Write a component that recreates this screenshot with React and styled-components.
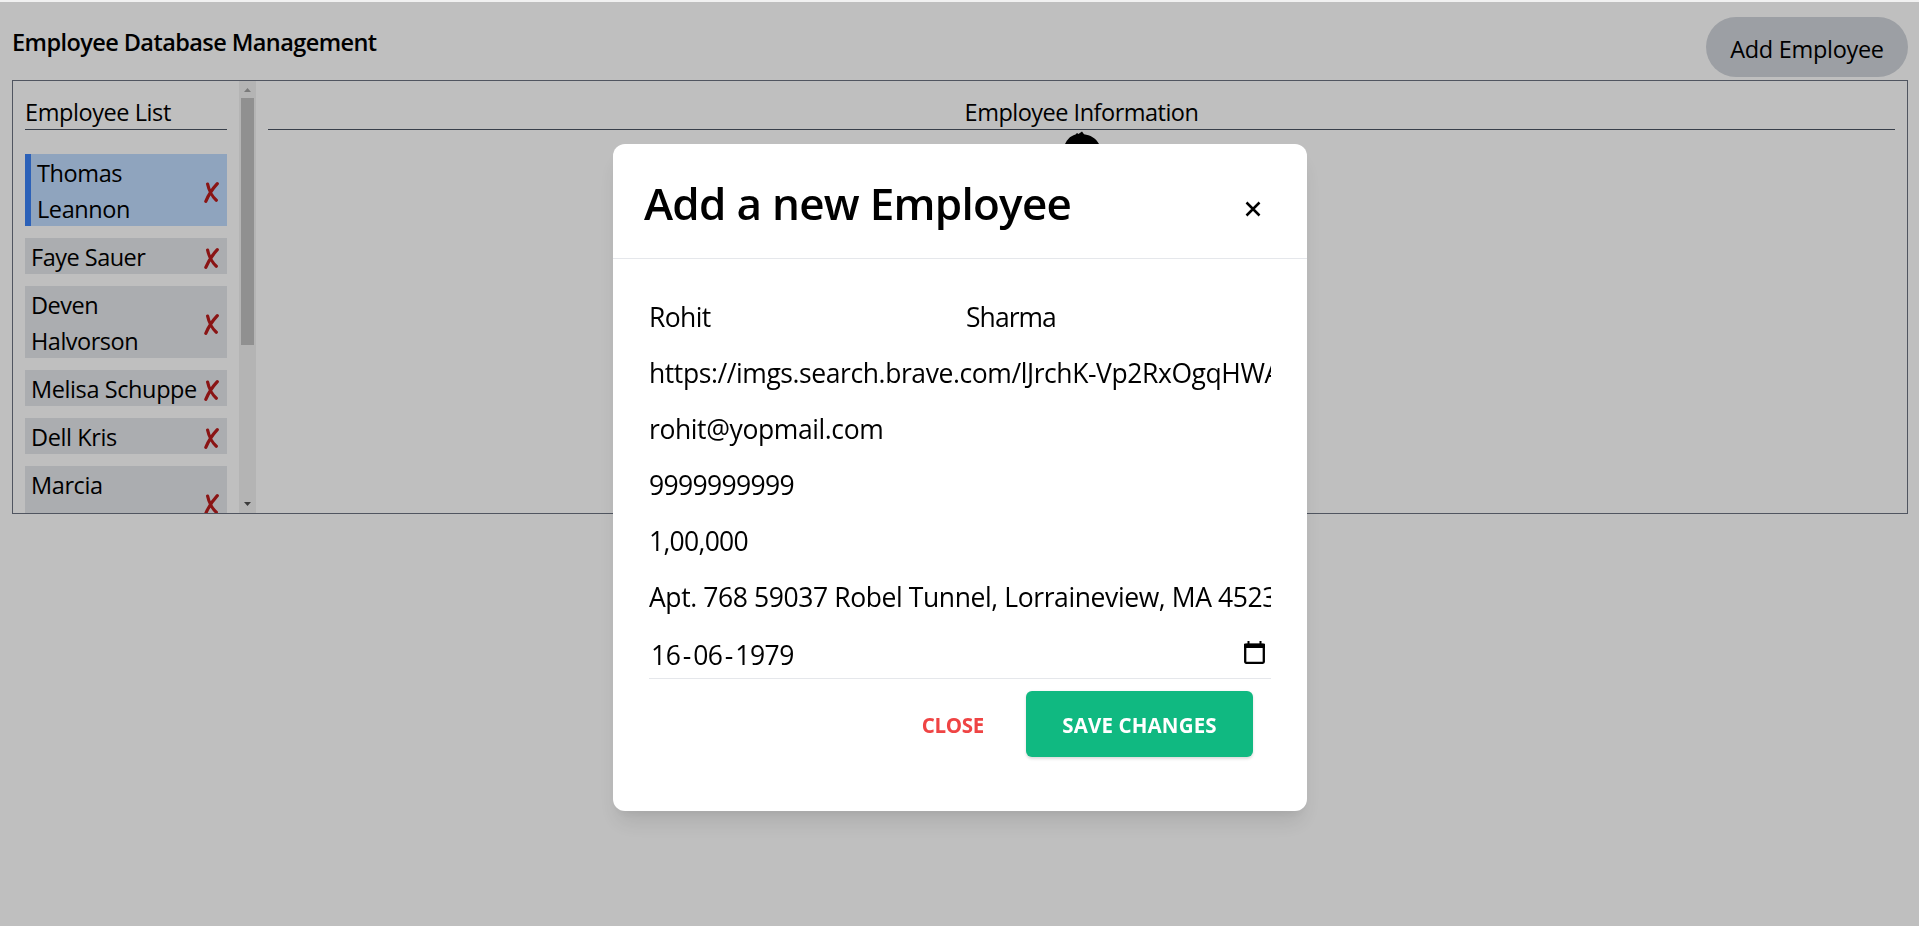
import React from "react";
import styled, { createGlobalStyle } from "styled-components";

const Global = createGlobalStyle`
  *, *::before, *::after { box-sizing: border-box; }
  html, body { margin: 0; padding: 0; height: 926px; overflow: hidden; background: #fff; }
  body { font-family: "Open Sans", "Noto Sans", sans-serif; font-size: 23.5px; line-height: 36px; color: #000; }
  button { font: inherit; color: inherit; border: 0; background: none; padding: 0; }
`;

const Label = styled.span`
  display: block;
  white-space: nowrap;
  letter-spacing: ${(p) => p.$track || 0}px;
`;

const Page = styled.div`
  height: 926px;
  border-top: 2px solid #f1f1f1;
  padding: 15px 11px 0 12px;
  display: flex;
  flex-direction: column;
  gap: 3px;
`;

const Header = styled.header`
  display: flex;
  justify-content: space-between;
  align-items: flex-start;
  height: 60px;
`;

const PageTitle = styled.h1`
  margin: 7px 0 0;
  font-size: 23.5px;
  font-weight: 600;
  line-height: 36px;
`;

const AddButton = styled.button`
  width: 202px;
  height: 60px;
  padding-top: 3px;
  border-radius: 30px;
  background: #d1d5db;
  display: flex;
  justify-content: center;
  align-items: center;
`;

const Board = styled.main`
  display: flex;
  height: 434px;
  border: 1px solid #6b7280;
  overflow: hidden;
`;

const ListPane = styled.section`
  width: 226px;
  padding: 13px 12px 0;
  flex: none;
`;

const PaneTitle = styled.h2`
  margin: 0;
  height: 36px;
  border-bottom: 1px solid #4b5563;
  font-size: 23.5px;
  font-weight: 400;
  line-height: 37px;
  display: flex;
  justify-content: ${(p) => (p.$center ? "center" : "flex-start")};
`;

const People = styled.ul`
  list-style: none;
  margin: 24px 0 0;
  padding: 0;
  display: flex;
  flex-direction: column;
  gap: 12px;
`;

const Person = styled.li`
  display: flex;
  align-items: center;
  justify-content: space-between;
  height: ${(p) => p.$rows * 36}px;
  padding: 0 8px 0 6px;
  background: ${(p) => (p.$active ? "#bfdbfe" : "#e5e7eb")};
  border-left: ${(p) => (p.$active ? "6px solid #3b82f6" : "0")};
`;

const PersonName = styled.div`
  align-self: flex-start;
  padding-top: 1px;
`;

const Scrollbar = styled.div`
  width: 17px;
  flex: none;
  background: #f1f1f1;
  display: flex;
  flex-direction: column;
  align-items: center;
`;

const ScrollArrow = styled.svg`
  width: 17px;
  height: 17px;
  display: block;
  flex: none;
`;

const Thumb = styled.div`
  width: 13px;
  height: 247px;
  background: #c1c1c1;
  margin-bottom: auto;
`;

const InfoPane = styled.section`
  flex: 1;
  padding: 13px 12px 0;
`;

const Avatar = styled.svg`
  display: block;
  width: 48px;
  height: 48px;
  margin: 1px auto 0;
`;

const Backdrop = styled.div`
  position: fixed;
  inset: 2px 0 0;
  background: rgba(0, 0, 0, 0.25);
  display: flex;
  justify-content: center;
  align-items: flex-start;
  padding: 142px 0 0 1px;
`;

const Dialog = styled.div`
  width: 694px;
  height: 667px;
  border-radius: 12px;
  background: #fff;
  box-shadow: 0 15px 22px -4px rgba(0, 0, 0, 0.1), 0 6px 9px -3px rgba(0, 0, 0, 0.05);
`;

const DialogHeader = styled.div`
  height: 115px;
  padding: 0 46px 0 31px;
  border-bottom: 1px solid #e5e7eb;
  display: flex;
  justify-content: space-between;
  align-items: center;
`;

const DialogTitle = styled.h3`
  margin: 4px 0 0;
  font-size: 44px;
  font-weight: 600;
  line-height: 60px;
`;

const CloseIcon = styled.svg`
  width: 16px;
  height: 16px;
  margin-top: 15px;
`;

const Form = styled.div`
  padding: 31px 36px 0;
`;

const FieldRow = styled.div`
  display: grid;
  grid-template-columns: ${(p) => (p.$split ? "317px 1fr" : "1fr")};
  height: 56px;
`;

const Field = styled.div`
  overflow: hidden;
  font-size: 26.5px;
  line-height: 55px;
  height: 55px;
`;

const DateField = styled.div`
  height: 53px;
  padding: 6px 6px 0 2px;
  border-bottom: 1px solid #e5e7eb;
  display: flex;
  justify-content: space-between;
  font-size: 26.5px;
  line-height: 46px;
`;

const DateParts = styled.div`
  display: flex;
  gap: 2.4px;
`;

const CalendarIcon = styled.svg`
  width: 21px;
  height: 23px;
  margin-top: 9px;
`;

const Actions = styled.div`
  display: flex;
  justify-content: flex-end;
  align-items: center;
  gap: 42px;
  padding: 12px 18px 0 0;
`;

const ActionButton = styled.button`
  height: 66px;
  padding-top: 2px;
  width: ${(p) => (p.$primary ? "227px" : "auto")};
  display: flex;
  align-items: center;
  justify-content: center;
  font-size: 20.5px;
  font-weight: 700;
  color: ${(p) => (p.$primary ? "#fff" : "#ef4444")};
  background: ${(p) => (p.$primary ? "#10b981" : "transparent")};
  border-radius: 6px;
  box-shadow: ${(p) => (p.$primary ? "0 1.5px 3px rgba(0,0,0,.14)" : "none")};
`;

const CrossSvg = styled.svg`
  width: 15px;
  height: 21px;
  flex: none;
  margin-top: 4px;
`;

const Cross = () => (
  <CrossSvg viewBox="0 0 15 21">
    <path d="M3.600 2C4.600 7 8 14.500 12.300 18.200M13.300 1.700C9.800 5.500 4.500 13 1.800 19.300" fill="none" stroke="#b91c1c" strokeWidth="3.200" strokeLinecap="round" />
  </CrossSvg>
);

const people = [
  { lines: ["Thomas", "Leannon"], rows: 2, active: true },
  { lines: ["Faye Sauer"], rows: 1, track: -0.5 },
  { lines: ["Deven", "Halvorson"], rows: 2, track: -0.5 },
  { lines: ["Melisa Schuppe"], rows: 1 },
  { lines: ["Dell Kris"], rows: 1 },
  { lines: ["Marcia"], rows: 2 },
];

const fields = [
  { value: "https://imgs.search.brave.com/lJrchK-Vp2RxOgqHWAz", track: -0.42 },
  { value: "rohit@yopmail.com", track: -0.4 },
  { value: "9999999999", track: -0.65 },
  { value: "1,00,000", track: -0.7 },
  { value: "Apt. 768 59037 Robel Tunnel, Lorraineview, MA 45236", track: -0.4 },
];

const dateParts = ["16", "-", "06", "-", "1979"];

export default function App() {
  return (
    <>
      <Global />
      <Page>
        <Header>
          <PageTitle><Label $track={-0.57}>Employee Database Management</Label></PageTitle>
          <AddButton><Label $track={-0.3}>Add Employee</Label></AddButton>
        </Header>
        <Board>
          <ListPane>
            <PaneTitle><Label $track={-0.42}>Employee List</Label></PaneTitle>
            <People>
              {people.map((p) => (
                <Person key={p.lines[0]} $active={p.active} $rows={p.rows}>
                  <PersonName>
                    {p.lines.map((l) => <Label key={l} $track={p.track || -0.4}>{l}</Label>)}
                  </PersonName>
                  <Cross />
                </Person>
              ))}
            </People>
          </ListPane>
          <Scrollbar>
            <ScrollArrow viewBox="0 0 17 17"><path d="M5 11l3.500-4 3.500 4z" fill="#a3a3a3" /></ScrollArrow>
            <Thumb />
            <ScrollArrow viewBox="0 0 17 17"><path d="M5 6l3.500 4L12 6z" fill="#505050" /></ScrollArrow>
          </Scrollbar>
          <InfoPane>
            <PaneTitle $center><Label $track={-0.5}>Employee Information</Label></PaneTitle>
            <Avatar viewBox="0 0 48 48">
              <path d="M5 18C8 9 12 5 17.500 3.500l1.500-1.500 1.500 1L24 .5 26 3.200C32 4 38 7 41 13L43 18z" fill="#000" />
            </Avatar>
          </InfoPane>
        </Board>
      </Page>
      <Backdrop>
        <Dialog>
          <DialogHeader>
            <DialogTitle><Label $track={-0.72}>Add a new Employee</Label></DialogTitle>
            <CloseIcon viewBox="0 0 16 16"><path d="M1.500 1.500l13 13M14.500 1.500l-13 13" stroke="#000" strokeWidth="2.500" /></CloseIcon>
          </DialogHeader>
          <Form>
            <FieldRow $split>
              <Field><Label $track={-0.6}>Rohit</Label></Field>
              <Field><Label $track={-0.95}>Sharma</Label></Field>
            </FieldRow>
            {fields.map((f) => (
              <FieldRow key={f.value}><Field><Label $track={f.track}>{f.value}</Label></Field></FieldRow>
            ))}
            <DateField>
              <DateParts>
                {dateParts.map((part, i) => <Label key={i} $track={-0.5}>{part}</Label>)}
              </DateParts>
              <CalendarIcon viewBox="0 0 21 23">
                <path d="M1.200 4h18.600v16.800a1 1 0 0 1-1 1H2.200a1 1 0 0 1-1-1z" fill="none" stroke="#000" strokeWidth="2.300" />
                <path d="M0 4.500a2 2 0 0 1 2-2h1.500V0h2v2.500h10V0h2v2.500H19a2 2 0 0 1 2 2V7H0z" fill="#000" />
              </CalendarIcon>
            </DateField>
            <Actions>
              <ActionButton><Label $track={-0.3}>CLOSE</Label></ActionButton>
              <ActionButton $primary><Label $track={0.15}>SAVE CHANGES</Label></ActionButton>
            </Actions>
          </Form>
        </Dialog>
      </Backdrop>
    </>
  );
}
